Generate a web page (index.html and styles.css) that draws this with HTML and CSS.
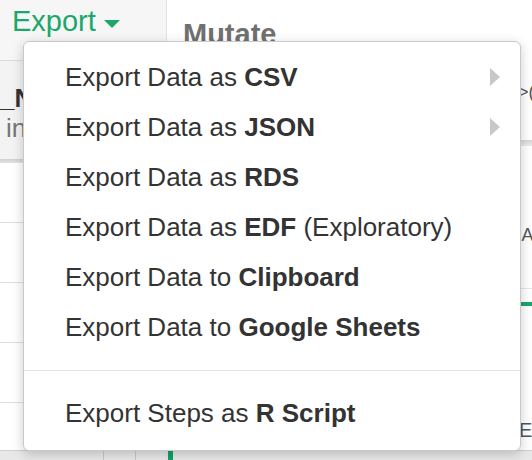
FILE: index.html
```html
<!DOCTYPE html>
<html>
<head>
<meta charset="utf-8">
<link rel="stylesheet" href="styles.css">
</head>
<body>
<div class="app">
  <div class="left">
    <div class="toolbar">
      <span class="export">Export</span><span class="caret"></span>
    </div>
    <div class="thead">
      <div class="colname">_NAME</div>
      <div class="coltype">int</div>
    </div>
    <div class="band"></div>
    <div class="row"></div>
    <div class="row"></div>
    <div class="row"></div>
    <div class="row"></div>
    <div class="row last"></div>
    <div class="strip">
      <span class="div1"></span><span class="div2"></span>
    </div>
  </div>
  <div class="right">
    <div class="rhead"><span class="mutate">Mutate</span></div>
    <div class="code1"><span>&gt;(</span></div>
    <div class="rband"></div>
    <div class="code2"><span>'A</span></div>
    <div class="gap"></div>
    <div class="greenline"></div>
    <div class="code3">
      <span class="dots">⋮</span>
      <span class="eparen">E)</span>
    </div>
    <div class="rstrip"><span class="gbar"></span></div>
  </div>

  <div class="menu">
    <div class="item">Export Data as <b>CSV</b><span class="arrow"></span></div>
    <div class="item">Export Data as <b>JSON</b><span class="arrow"></span></div>
    <div class="item">Export Data as <b>RDS</b></div>
    <div class="item">Export Data as <b>EDF</b> (Exploratory)</div>
    <div class="item">Export Data to <b>Clipboard</b></div>
    <div class="item">Export Data to <b>Google Sheets</b></div>
    <div class="sep"></div>
    <div class="item">Export Steps as <b>R Script</b></div>
  </div>
</div>
</body>
</html>
```

FILE: styles.css
```css
* { box-sizing: border-box; }
html, body { margin: 0; padding: 0; }
body {
  width: 532px;
  height: 460px;
  overflow: hidden;
  background: #fff;
  font-family: "Liberation Sans", Arial, sans-serif;
  color: #333;
}
.app {
  position: relative;
  display: flex;
  width: 532px;
  height: 460px;
}
.left {
  width: 167px;
  flex: none;
  display: flex;
  flex-direction: column;
  border-right: 1px solid #e2e2e2;
  background: #fff;
}
.toolbar {
  height: 61px;
  flex: none;
  background: #f6f6f6;
  border-bottom: 1px solid #dcdcdc;
  display: flex;
  align-items: flex-start;
  padding: 5px 0 0 12px;
}
.export {
  font-size: 29px;
  line-height: 33px;
  color: #1ba86a;
}
.caret {
  width: 0;
  height: 0;
  margin: 15px 0 0 8px;
  border-left: 8px solid transparent;
  border-right: 8px solid transparent;
  border-top: 8px solid #1ba86a;
}
.thead {
  height: 98px;
  flex: none;
  background: #f3f3f3;
  padding-top: 22px;
  font-size: 26px;
  line-height: 30px;
  white-space: nowrap;
}
.colname { font-weight: bold; color: #333; }
.coltype { color: #777; padding-left: 6px; }
.band {
  height: 4px;
  flex: none;
  background: linear-gradient(#cfcfcf, #e4e4e4);
}
.row {
  height: 60px;
  flex: none;
  border-bottom: 1px solid #dedede;
}
.row.last { flex: 1; border-bottom: none; }
.strip {
  height: 10px;
  flex: none;
  background: #e8e8e8;
  border-top: 1px solid #cfcfcf;
  display: flex;
}
.div1 { margin-left: 103px; width: 1px; background: #c8c8c8; }
.div2 { margin-left: 31px; width: 1px; background: #c8c8c8; }

.right {
  flex: 1;
  display: flex;
  flex-direction: column;
  background: #fff;
  white-space: nowrap;
  overflow: hidden;
}
.rhead {
  height: 60px;
  flex: none;
  padding: 18px 0 0 16px;
}
.mutate {
  font-size: 29px;
  line-height: 32px;
  font-weight: bold;
  color: #707070;
}
.code1 {
  height: 80px;
  flex: none;
  padding: 22px 0 0 351px;
  font-size: 18px;
  line-height: 21px;
  color: #555;
}
.rband {
  height: 6px;
  flex: none;
  background: linear-gradient(#d6d6d6, #ececec);
}
.code2 {
  height: 143px;
  flex: none;
  padding: 79px 0 0 351px;
  font-size: 18px;
  line-height: 21px;
  color: #555;
  border-bottom: 1px solid #e6e6e6;
}
.gap { height: 13px; flex: none; }
.greenline { height: 4px; flex: none; background: #1ba86a; }
.code3 {
  flex: 1;
  display: flex;
  flex-direction: column;
  padding: 17px 0 0 356px;
  color: #888;
}
.dots { font-size: 22px; line-height: 26px; }
.eparen {
  margin: 70px 0 0 -4px;
  font-size: 20px;
  line-height: 22px;
  color: #555;
}
.rstrip {
  height: 10px;
  flex: none;
  background: #e8e8e8;
  border-top: 1px solid #cfcfcf;
  display: flex;
}
.gbar { margin-left: 1px; width: 5px; background: #12a06a; }

.menu {
  position: absolute;
  left: 23px;
  top: 41px;
  width: 498px;
  background: #fff;
  border: 1px solid #c9c9c9;
  border-radius: 6px;
  box-shadow: 0 3px 12px rgba(0, 0, 0, 0.2);
  padding: 10px 0 12px;
}
.item {
  position: relative;
  height: 50px;
  line-height: 50px;
  padding-left: 41px;
  font-size: 26px;
  color: #333;
  white-space: nowrap;
}
.item b { font-weight: bold; }
.arrow {
  position: absolute;
  right: 20px;
  top: 16px;
  width: 0;
  height: 0;
  border-left: 10px solid #c8c8c8;
  border-top: 9px solid transparent;
  border-bottom: 9px solid transparent;
}
.sep {
  height: 1px;
  margin: 18px 0 17px;
  background: #e3e3e3;
}
```
